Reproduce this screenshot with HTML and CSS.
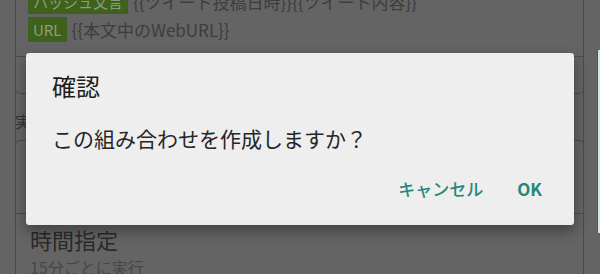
FILE: index.html
```html
<!DOCTYPE html>
<html lang="ja">

<head>
	<meta charset="UTF-8">
	<title>確認</title>
	<link rel="stylesheet" href="styles.css">
</head>

<body>
	<!-- 背後の設定画面（暗転済み） -->
	<div class="page">
		<div class="card card-top">
			<div class="tag-row">
				<span class="tag">ハッシュ文言</span>
				<span class="tag-text">{{ツイート投稿日時}}{{ツイート内容}}</span>
			</div>
			<div class="tag-row">
				<span class="tag">URL</span>
				<span class="tag-text">{{本文中のWebURL}}</span>
			</div>
			<div class="card-field"></div>
		</div>

		<div class="section-label">実行タイミング</div>

		<div class="card card-bottom">
			<div class="option"></div>
			<div class="option option-time">
				<div class="option-title">時間指定</div>
				<div class="option-sub">15分ごとに実行</div>
			</div>
		</div>
	</div>

	<div class="edge-strip"></div>

	<!-- ダイアログ -->
	<div class="dialog">
		<div class="dialog-title">確認</div>
		<div class="dialog-message">この組み合わせを作成しますか？</div>
		<div class="dialog-buttons">
			<a href="#" class="btn">キャンセル</a>
			<a href="#" class="btn btn-ok">OK</a>
		</div>
	</div>
</body>

</html>
```

FILE: styles.css
```css
/* リセット */
* {
	margin: 0;
	padding: 0;
	box-sizing: border-box;
}

a {
	text-decoration: none;
}

body {
	width: 600px;
	height: 274px;
	overflow: hidden;
	position: relative;
	background-color: #646464;
	font-family: "Noto Sans CJK JP", "Noto Sans", sans-serif;
}

/* 背後の画面 */
.page {
	width: 569px;
	height: 274px;
	margin-left: 15px;
	border-left: 1px solid #4b4b4b;
	border-right: 1px solid #4b4b4b;
}

.card {
	margin: 0 -1px;
	border: 1px solid #4b4b4b;
}

.card-top {
	margin-top: -12px;
	padding-top: 1px;
	border-top: none;
	border-radius: 0 0 5px 5px;
}

.tag-row {
	height: 25px;
	margin: 0 0 3px 12px;
	display: flex;
	align-items: center;
}

.tag {
	height: 25px;
	padding: 0 5px;
	background-color: #3e611b;
	color: #8e9d7f;
	font-size: 15px;
	line-height: 25px;
}

.tag-text {
	margin-left: 5px;
	color: #3d3d3d;
	font-size: 17px;
}

.card-field {
	height: 37px;
	margin-top: 14px;
	border-top: 1px solid #4b4b4b;
}

.section-label {
	height: 46px;
	padding-top: 17px;
	margin-left: -1px;
	color: #343434;
	font-size: 16px;
	line-height: 20px;
}

.card-bottom {
	height: 140px;
	border-bottom: none;
	border-radius: 5px 5px 0 0;
}

.option {
	height: 73px;
	border-bottom: 1px solid #4b4b4b;
}

.option-time {
	height: auto;
	border-bottom: none;
	padding: 10px 0 0 14px;
}

.option-title {
	color: #2a2a2a;
	font-size: 22px;
	line-height: 30px;
}

.option-sub {
	color: #474747;
	font-size: 16px;
	line-height: 26px;
}

.edge-strip {
	position: absolute;
	top: 50px;
	right: 0;
	width: 3px;
	height: 183px;
	border-left: 1px solid #555;
	background-color: #d0e4ec;
}

/* ダイアログ */
.dialog {
	position: absolute;
	left: 26px;
	top: 53px;
	width: 548px;
	height: 172px;
	padding: 18px 24px 18px 26px;
	background-color: #eeeeee;
	border-radius: 3px;
	box-shadow: 0 6px 14px rgba(0, 0, 0, 0.35);

	display: flex;
	flex-direction: column;
}

.dialog-title {
	color: #1e1e1e;
	font-size: 24px;
	line-height: 30px;
}

.dialog-message {
	margin-top: 23px;
	color: #262626;
	font-size: 21px;
	line-height: 28px;
}

.dialog-buttons {
	margin-top: auto;
	display: flex;
	justify-content: flex-end;
}

.btn {
	height: 36px;
	padding: 0 8px;
	color: #23877d;
	font-size: 17px;
	font-weight: 500;
	line-height: 36px;
}

.btn-ok {
	margin-left: 18px;
	font-weight: 700;
}
```
